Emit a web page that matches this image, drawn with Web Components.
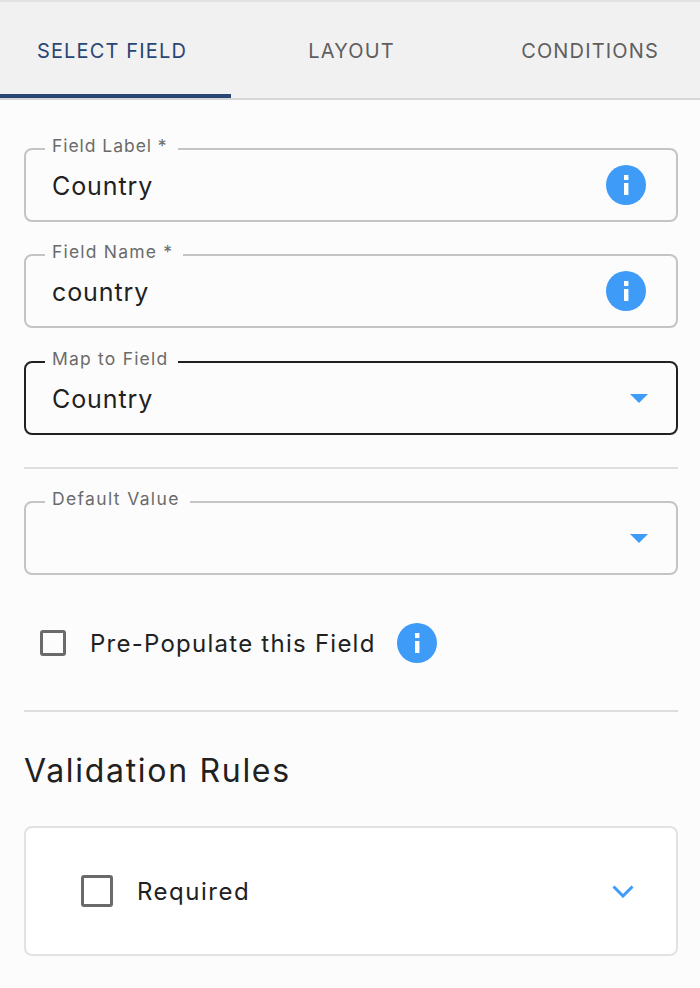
<!DOCTYPE html>
<html>
<head>
<meta charset="utf-8">
<style>
  html, body { margin: 0; padding: 0; }
  body { background: #fcfcfc; font-family: Inter, "Noto Sans", sans-serif; color: #212121; height: 988px; overflow: hidden; }
</style>
</head>
<body>
<field-editor>
  <tab-bar slot="tabs">
    <tab-item active>SELECT FIELD</tab-item>
    <tab-item>LAYOUT</tab-item>
    <tab-item>CONDITIONS</tab-item>
  </tab-bar>
  <form-field label="Field Label *" value="Country" style="margin-bottom:32px;--label-ls:0.95px"><info-icon></info-icon></form-field>
  <form-field label="Field Name *" value="country" style="margin-bottom:33px"><info-icon></info-icon></form-field>
  <form-field label="Map to Field" value="Country" focused><select-arrow></select-arrow></form-field>
  <line-divider style="margin:32px 0"></line-divider>
  <form-field label="Default Value" value="" style="--label-ls:1.35px"><select-arrow></select-arrow></form-field>
  <check-row label="Pre-Populate this Field"><info-icon></info-icon></check-row>
  <line-divider></line-divider>
  <section-title>Validation Rules</section-title>
  <rule-card label="Required"></rule-card>
</field-editor>

<script>
class FieldEditor extends HTMLElement {
  constructor() {
    super();
    this.attachShadow({ mode: "open" });
    this.shadowRoot.innerHTML = `
      <style>
        :host { display: block; }
        .body { padding: 48px 22px 0 24px; }
      </style>
      <slot name="tabs"></slot>
      <div class="body"><slot></slot></div>
    `;
  }
}

class TabBar extends HTMLElement {
  constructor() {
    super();
    this.attachShadow({ mode: "open" });
    this.shadowRoot.innerHTML = `
      <style>
        :host {
          display: grid;
          grid-template-columns: 231px 241px 236px;
          height: 96px;
          margin-top: 2px;
          background: #f1f1f1;
          box-shadow: 0 -2px 0 #e2e2e2;
          border-bottom: 2px solid #d6d6d6;
          overflow: hidden;
        }
      </style>
      <slot></slot>
    `;
  }
}

class TabItem extends HTMLElement {
  constructor() {
    super();
    this.attachShadow({ mode: "open" });
    this.shadowRoot.innerHTML = `
      <style>
        :host {
          display: flex;
          align-items: center;
          justify-content: center;
          padding-top: 6px;
          box-sizing: border-box;
          height: 96px;
          font-size: 20px;
          font-weight: 400;
          letter-spacing: 1.15px;
          color: #5f5f5f;
          border-bottom: 4px solid transparent;
          white-space: nowrap;
        }
        :host([active]) { color: #2a4674; border-bottom-color: #2a4674; padding-right: 7px; }
      </style>
      <slot></slot>
    `;
  }
}

class FormField extends HTMLElement {
  constructor() {
    super();
    this.attachShadow({ mode: "open" });
    const label = this.getAttribute("label");
    const value = this.getAttribute("value") || "";
    this.shadowRoot.innerHTML = `
      <style>
        :host { display: block; }
        .box {
          position: relative;
          box-sizing: border-box;
          height: 74px;
          border: 2px solid #c4c4c4;
          border-radius: 8px;
          display: flex;
          align-items: center;
          justify-content: space-between;
          padding: 0 30px 0 26px;
        }
        :host([focused]) .box { border-color: #212121; }
        .label {
          position: absolute;
          left: 19px;
          top: -15px;
          padding: 0 10px 0 7px;
          background: #fcfcfc;
          font-size: 17.5px;
          letter-spacing: var(--label-ls, 1.2px);
          line-height: 22px;
          color: #6b6b6b;
        }
        .value { font-size: 25px; letter-spacing: 0.9px; color: #212121; padding-top: 1px; }
      </style>
      <div class="box">
        <span class="label">${label}</span>
        <span class="value">${value}</span>
        <slot></slot>
      </div>
    `;
  }
}

class InfoIcon extends HTMLElement {
  constructor() {
    super();
    this.attachShadow({ mode: "open" });
    this.shadowRoot.innerHTML = `
      <style>:host { display: block; width: 40px; height: 40px; flex: none; } svg { display: block; }</style>
      <svg width="40" height="40" viewBox="0 0 40 40">
        <circle cx="20" cy="20" r="20" fill="#3e9bf8"/>
        <rect x="18" y="10" width="4.4" height="5" fill="#fff"/>
        <rect x="18" y="18" width="4.4" height="12" fill="#fff"/>
      </svg>
    `;
  }
}

class SelectArrow extends HTMLElement {
  constructor() {
    super();
    this.attachShadow({ mode: "open" });
    this.shadowRoot.innerHTML = `
      <style>:host { display: block; width: 18px; height: 9px; flex: none; margin: 1px -2px 0 0; } svg { display: block; }</style>
      <svg width="18" height="9" viewBox="0 0 18 9"><path d="M0 0h18L9 9z" fill="#3e9bf8"/></svg>
    `;
  }
}

class CheckBox extends HTMLElement {
  constructor() {
    super();
    this.attachShadow({ mode: "open" });
    this.shadowRoot.innerHTML = `
      <style>
        :host {
          display: block;
          box-sizing: border-box;
          flex: none;
          width: var(--size, 26px);
          height: var(--size, 26px);
          border: 3px solid #6a6a6a;
          border-radius: 3px;
        }
      </style>
    `;
  }
}

class CheckRow extends HTMLElement {
  constructor() {
    super();
    this.attachShadow({ mode: "open" });
    this.shadowRoot.innerHTML = `
      <style>
        :host {
          display: flex;
          align-items: center;
          height: 135px;
          padding-left: 16px;
          font-size: 24px;
          letter-spacing: 1.25px;
          color: #212121;
        }
        span { margin: 0 21px 0 24px; padding-top: 2px; }
      </style>
      <check-box></check-box>
      <span>${this.getAttribute("label")}</span>
      <slot></slot>
    `;
  }
}

class LineDivider extends HTMLElement {
  constructor() {
    super();
    this.attachShadow({ mode: "open" });
    this.shadowRoot.innerHTML = `<style>:host { display: block; height: 2px; background: #dedede; }</style>`;
  }
}

class SectionTitle extends HTMLElement {
  constructor() {
    super();
    this.attachShadow({ mode: "open" });
    this.shadowRoot.innerHTML = `
      <style>
        :host {
          display: block;
          margin: 38px 0 34px;
          font-size: 32px;
          line-height: 42px;
          letter-spacing: 1.7px;
          color: #212121;
        }
      </style>
      <slot></slot>
    `;
  }
}

class RuleCard extends HTMLElement {
  constructor() {
    super();
    this.attachShadow({ mode: "open" });
    this.shadowRoot.innerHTML = `
      <style>
        :host {
          display: flex;
          align-items: center;
          box-sizing: border-box;
          height: 130px;
          padding: 0 42px 0 55px;
          background: #fff;
          border: 2px solid #e2e2e2;
          border-radius: 8px;
          --size: 32px;
        }
        check-box { margin-right: 24px; }
        span { flex: 1; font-size: 24px; letter-spacing: 1.5px; color: #212121; }
        svg { display: block; }
      </style>
      <check-box></check-box>
      <span>${this.getAttribute("label")}</span>
      <svg width="22" height="13" viewBox="0 0 22 13" fill="none">
        <path d="M1.5 1.5 11 11l9.5-9.5" stroke="#3e9bf8" stroke-width="3"/>
      </svg>
    `;
  }
}

customElements.define("field-editor", FieldEditor);
customElements.define("tab-bar", TabBar);
customElements.define("tab-item", TabItem);
customElements.define("form-field", FormField);
customElements.define("info-icon", InfoIcon);
customElements.define("select-arrow", SelectArrow);
customElements.define("check-box", CheckBox);
customElements.define("check-row", CheckRow);
customElements.define("line-divider", LineDivider);
customElements.define("section-title", SectionTitle);
customElements.define("rule-card", RuleCard);
</script>
</body>
</html>
